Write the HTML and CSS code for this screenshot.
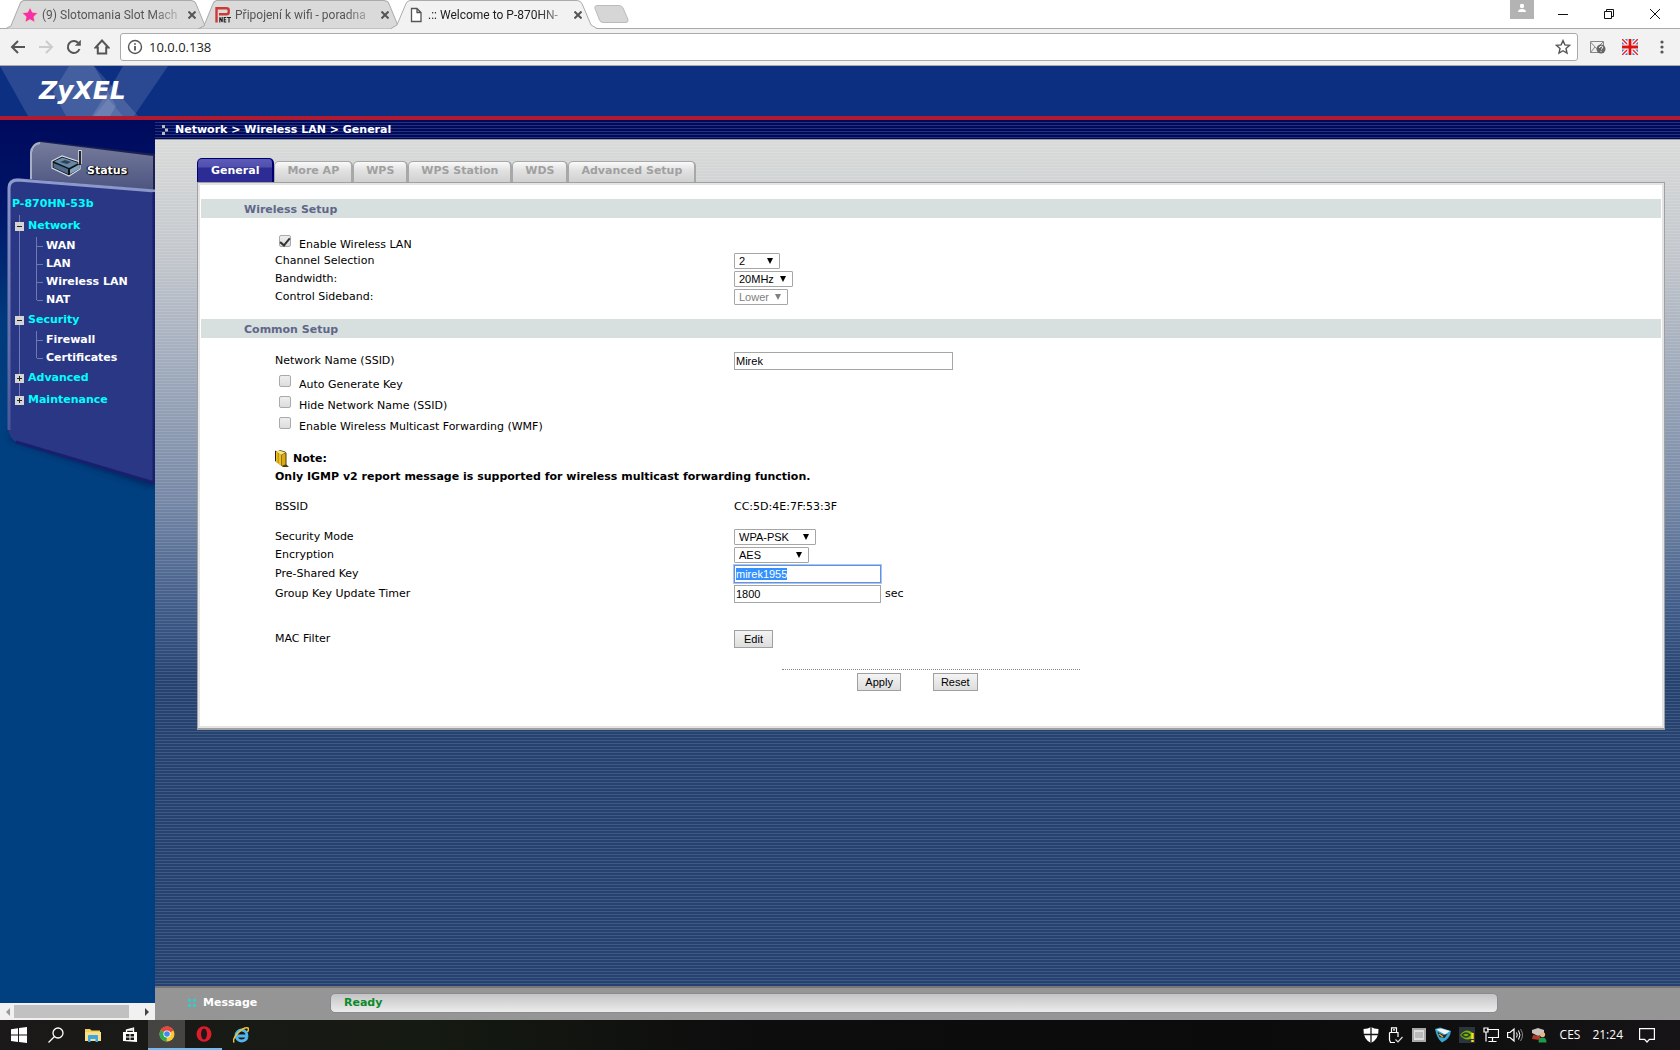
FILE: index.html
```html
<!DOCTYPE html>
<html lang="en">
<head>
<meta charset="utf-8">
<title>.:: Welcome to P-870HN-53b ::.</title>
<link rel="stylesheet" href="styles.css">
</head>
<body>
<div class="screen">

  <div class="tabstrip">
    <div class="browser-tab">
      <svg class="tab-shape" viewBox="0 0 208 28" preserveAspectRatio="none"><path d="M0 28L6 25L15 4Q16 1 19 .5H188Q192 1 193 4L202 25L208 28Z" fill="#dadada" stroke="#aaa"/></svg>
      <svg class="tab-icon" viewBox="0 0 16 16"><path d="M8 .5l2.300 4.700 5.400.7-3.900 3.800 1 5.500L8 12.600 3.200 15.200l1-5.500L.3 5.900l5.400-.7z" fill="#f52fa8" stroke="#f4d9a8" stroke-width=".6"/></svg>
      <span class="tab-title">(9) Slotomania Slot Mach</span>
      <button class="tab-close" aria-label="Close tab"><svg viewBox="0 0 8 8"><path d="M.5.5l7 7M7.500.5l-7 7"/></svg></button>
    </div>
    <div class="browser-tab">
      <svg class="tab-shape" viewBox="0 0 208 28" preserveAspectRatio="none"><path d="M0 28L6 25L15 4Q16 1 19 .5H188Q192 1 193 4L202 25L208 28Z" fill="#dadada" stroke="#aaa"/></svg>
      <svg class="tab-icon" viewBox="0 0 16 16"><path d="M1.500 15.500V1.300h10q2.200 0 2.200 1.800v2.200q0 2-2.200 2H4" fill="none" stroke="#cc3a38" stroke-width="2.400"/><path d="M4.800 15.500V10.200l2.400 4.800v-5M11.300 10.500H9.200v4.500h2.100M9.200 12.700h2M12 10.500h4M14 10.500v5" fill="none" stroke="#222" stroke-width="1.100"/></svg>
      <span class="tab-title">Připojení k wifi - poradna</span>
      <button class="tab-close" aria-label="Close tab"><svg viewBox="0 0 8 8"><path d="M.5.5l7 7M7.500.5l-7 7"/></svg></button>
    </div>
    <div class="browser-tab active">
      <svg class="tab-shape" viewBox="0 0 208 29" preserveAspectRatio="none"><path d="M0 29L6 25L15 4Q16 1 19 .5H188Q192 1 193 4L202 25L208 29Z" fill="#f2f2f2"/><path d="M0 28.500L6 25L15 4Q16 1 19 .5H188Q192 1 193 4L202 25L208 28.500" fill="none" stroke="#aaa"/></svg>
      <svg class="tab-icon" viewBox="0 0 16 16"><path d="M3.500 1.500H9l4 4v9H3.500zM9 1.500v4h4" fill="#fff" stroke="#555" stroke-width="1.300"/></svg>
      <span class="tab-title">.:: Welcome to P-870HN-</span>
      <button class="tab-close" aria-label="Close tab"><svg viewBox="0 0 8 8"><path d="M.5.5l7 7M7.500.5l-7 7"/></svg></button>
    </div>
    <button class="new-tab" aria-label="New tab"><svg viewBox="0 0 35 18"><path d="M3 .5H25Q28 .5 29 3L34 14.500Q34.500 17.500 32 17.500H9Q6.500 17.500 5.500 15L.8 3Q.5.8 3 .5Z" fill="#d6d6d6" stroke="#bbb"/></svg></button>
    <div class="window-controls">
      <span class="profile"><svg viewBox="0 0 24 19"><circle cx="12" cy="6" r="2.200" fill="#fff"/><path d="M8 12q0-3 4-3t4 3z" fill="#fff"/></svg></span>
      <button aria-label="Minimize"><svg viewBox="0 0 12 12"><path d="M1 6.500h10"/></svg></button>
      <button aria-label="Restore"><svg viewBox="0 0 12 12"><path d="M1.500 3.500h7v7h-7zM3.500 3V1.500h7v7H9"/></svg></button>
      <button aria-label="Close"><svg viewBox="0 0 12 12"><path d="M1 1l10 10M11 1L1 11"/></svg></button>
    </div>
  </div>

  <div class="toolbar">
    <button aria-label="Back"><svg viewBox="0 0 16 16"><path d="M15 8H2M8 2L2 8l6 6"/></svg></button>
    <button aria-label="Forward" disabled><svg viewBox="0 0 16 16"><path d="M1 8h13M8 2l6 6-6 6"/></svg></button>
    <button aria-label="Reload"><svg viewBox="0 0 16 16"><path d="M13.500 10A6 6 0 1 1 12.200 3.800"/><path d="M14.800.8v6h-6z" fill="#555" stroke="none"/></svg></button>
    <button aria-label="Home"><svg viewBox="0 0 16 16"><path d="M8 1.500L1.500 8.500h2.300v6h8.400v-6h2.300z"/></svg></button>
    <div class="omnibox">
      <svg viewBox="0 0 16 16"><circle cx="8" cy="8" r="6.500" fill="none" stroke="#555" stroke-width="1.400"/><path d="M8 7v4.500M8 4.200v1.600" stroke="#555" stroke-width="1.800"/></svg>
      <input class="address" aria-label="Address" value="10.0.0.138" spellcheck="false">
      <svg viewBox="0 0 16 16"><path d="M8 1.600l1.900 4.300 4.600.5-3.500 3.100 1 4.600L8 11.700l-4 2.400 1-4.600L1.500 6.400l4.600-.5z" fill="none" stroke="#555" stroke-width="1.400"/></svg>
    </div>
    <svg class="ext" viewBox="0 0 16 16"><path d="M.5 2.500h13v11H.5zM.5 3l6 6.500 6.500-6.500M.5 13.500L5 8" fill="#eee" stroke="#888"/><circle cx="11" cy="10" r="4.500" fill="#666"/><path d="M9.500 9q0-1.800 1.700-1.800T12.700 9L11 10.500M11 11.800v1" stroke="#fff" fill="none"/></svg>
    <svg class="ext" viewBox="0 0 16 16"><path d="M0 0h16v16H0z" fill="#4a7fd0"/><path d="M0 0l16 16M16 0L0 16" stroke="#fff" stroke-width="4"/><path d="M0 0l16 16M16 0L0 16" stroke="#e22" stroke-width="1.500"/><path d="M8 0v16M0 8h16" stroke="#fff" stroke-width="5"/><path d="M8 0v16M0 8h16" stroke="#e01010" stroke-width="2.800"/></svg>
    <button class="menu" aria-label="Menu"><svg viewBox="0 0 16 16"><circle cx="8" cy="3" r="1.600"/><circle cx="8" cy="8" r="1.600"/><circle cx="8" cy="13" r="1.600"/></svg></button>
  </div>

  <header class="banner">
    <svg class="diamonds" viewBox="0 0 170 50"><g fill="#fff"><path d="M0 0H94L138 50H28Z" opacity=".13"/><path d="M69 0H94L116 40L110 50H66L53 26Z" opacity=".12"/><path d="M123 0H168L134 50H92L115 14Z" opacity=".13"/><path d="M94 50L108 33L123 50Z" opacity=".1"/></g></svg>
    <span class="brand">ZyXEL</span>
  </header>

  <div class="frames">
    <aside class="sidebar">
      <nav class="side-panel">
        <svg class="panel-art" viewBox="0 0 155 370" aria-hidden="true">
          <defs>
            <linearGradient id="tabfill" x1="0" y1="0" x2="0" y2="1"><stop offset="0" stop-color="#767c9c"/><stop offset=".6" stop-color="#585f88"/><stop offset="1" stop-color="#454c78"/></linearGradient>
            <linearGradient id="rim" x1="0" y1="0" x2="0" y2="1"><stop offset="0" stop-color="#8e9acb"/><stop offset="1" stop-color="#4c5798"/></linearGradient>
            <filter id="soft" x="-10%" y="-10%" width="120%" height="120%"><feGaussianBlur stdDeviation="3"/></filter>
          </defs>
          <path d="M10 320L155 368V340L14 300Z" fill="#02285e" filter="url(#soft)"/>
          <path d="M31 80V32Q32 22 41 21L155 34V80Z" fill="#1b2050"/>
          <path d="M30 80V33Q31 23 40 22L153 36V80Z" fill="url(#tabfill)"/>
          <path d="M31 62V33Q32 24 40 23" fill="none" stroke="#a8aec6" stroke-width="2"/>
          <path d="M8 308V66Q9 58 17 58L155 70V363L16 322Q9 318 8 308Z" fill="#2a3784"/>
          <path d="M9 310V68Q9 60 18 60L155 71" fill="none" stroke="url(#rim)" stroke-width="3"/>
          <path d="M16 322L155 363M154 72V363" fill="none" stroke="#18206e" stroke-width="3"/>
        </svg>
        <a class="status" href="#status">
          <svg viewBox="0 0 32 28"><path d="M1 12L11 7l18 6v7l-11 7L1 19z" fill="#111" stroke="#d8dce8" stroke-width="1.200"/><path d="M29 15V1" stroke="#d8dce8" stroke-width="3.500"/><path d="M29 16V2" stroke="#111" stroke-width="1.800"/><path d="M3 12.500l8.500-4 16 5.500-9.500 5z" fill="#6689aa"/><path d="M2.500 14l14.500 6v5L2.500 18.500z" fill="#4d6c8b"/><path d="M19 20.500l9-5v4.500l-9 5z" fill="#7fa2bd"/><path d="M9 13l5-2 6 2-4 2z" fill="#2d4358"/></svg>
          Status
        </a>
        <div class="tree">
          <a class="device" href="#device">P-870HN-53b</a>
          <ul>
            <li><a class="group open" href="#network">Network</a>
              <ul><li><a href="#wan">WAN</a></li><li><a href="#lan">LAN</a></li><li><a href="#wlan">Wireless LAN</a></li><li><a href="#nat">NAT</a></li></ul>
            </li>
            <li><a class="group open" href="#security">Security</a>
              <ul><li><a href="#firewall">Firewall</a></li><li><a href="#certificates">Certificates</a></li></ul>
            </li>
            <li class="closed"><a class="group" href="#advanced">Advanced</a></li>
            <li class="closed"><a class="group" href="#maintenance">Maintenance</a></li>
          </ul>
        </div>
      </nav>
      <div class="hscroll"><span class="arrow left"></span><span class="thumb"></span><span class="arrow right"></span></div>
    </aside>

    <main class="main">
      <div class="crumbs">
        <svg viewBox="0 0 8 11"><path d="M1 0h3v3H1zM4 3.500h3v3H4zM1 7h3v3H1z" fill="#bbb"/></svg>
        Network &gt; Wireless LAN &gt; General
      </div>
      <div class="content">
        <nav class="page-tabs">
          <a class="current" href="#general">General</a>
          <a href="#more-ap">More AP</a>
          <a href="#wps">WPS</a>
          <a href="#wps-station">WPS Station</a>
          <a href="#wds">WDS</a>
          <a href="#advanced-setup">Advanced Setup</a>
        </nav>
        <form class="card">
          <h2>Wireless Setup</h2>
          <div class="group-rows first">
            <label class="check"><input type="checkbox" checked>Enable Wireless LAN</label>
            <div class="row"><label for="channel">Channel Selection</label>
              <span class="select w46"><select id="channel"><option>2</option></select></span></div>
            <div class="row"><label for="bandwidth">Bandwidth:</label>
              <span class="select w59"><select id="bandwidth"><option>20MHz</option></select></span></div>
            <div class="row"><label for="sideband">Control Sideband:</label>
              <span class="select w54 off"><select id="sideband" disabled><option>Lower</option></select></span></div>
          </div>
          <h2>Common Setup</h2>
          <div class="group-rows second">
            <div class="row tall"><label for="ssid">Network Name (SSID)</label><input class="text wide" id="ssid" value="Mirek"></div>
            <label class="check tall"><input type="checkbox">Auto Generate Key</label>
            <label class="check tall"><input type="checkbox">Hide Network Name (SSID)</label>
            <label class="check tall"><input type="checkbox">Enable Wireless Multicast Forwarding (WMF)</label>
            <div class="note">
              <svg viewBox="0 0 14 18"><path d="M0 .5l3 1.500V13L0 11z" fill="#2a2410"/><path d="M2 1.500L5 0l5 1.500 1.500 1.500v11.500l2.500 2.500H8L1.500 12z" fill="#4a3c10"/><path d="M1 1.500L6 5v10.500L1 12z" fill="#f0c020"/><path d="M1 1.500L4.500.5l6 2L6 5z" fill="#fbe27a"/><path d="M6.500 5l4-2v11.500l-4 1.500z" fill="#dba912"/><path d="M3.200 3v10" stroke="#9a7a10" stroke-width=".8"/></svg>
              Note:
            </div>
            <p class="note-text">Only IGMP v2 report message is supported for wireless multicast forwarding function.</p>
            <div class="row bssid"><span>BSSID</span><span>CC:5D:4E:7F:53:3F</span></div>
            <div class="row"><label for="mode">Security Mode</label>
              <span class="select w82"><select id="mode"><option>WPA-PSK</option></select></span></div>
            <div class="row"><label for="enc">Encryption</label>
              <span class="select w75"><select id="enc"><option>AES</option></select></span></div>
            <div class="row key"><label for="psk">Pre-Shared Key</label><input class="text" id="psk" value="mirek1955"></div>
            <div class="row key"><label for="timer">Group Key Update Timer</label><span class="unit"><input class="text" id="timer" value="1800">sec</span></div>
            <div class="row mac"><span>MAC Filter</span><button type="button">Edit</button></div>
          </div>
          <div class="actions"><button type="button">Apply</button><button type="button">Reset</button></div>
        </form>
      </div>
      <footer class="message-bar">
        <span class="message-label"><svg viewBox="0 0 9 9"><path d="M0 0h3v3H0zM5 0h3v3H5zM0 5h3v3H0zM5 5h3v3H5z" fill="#3cc8c4"/></svg>Message</span>
        <output class="message">Ready</output>
      </footer>
    </main>
  </div>

  <div class="taskbar">
    <button aria-label="Start"><svg viewBox="0 0 16 16"><path d="M0 2.200L7 1.200V7.600H0zM8 1L16 0V7.600H8zM0 8.500H7V15L0 14zM8 8.500H16V16L8 15z" fill="#fff"/></svg></button>
    <button aria-label="Search"><svg viewBox="0 0 16 16"><circle cx="10" cy="6" r="5" fill="none" stroke="#fff" stroke-width="1.300"/><path d="M6.500 9.500L.5 15.500" stroke="#fff" stroke-width="1.300"/></svg></button>
    <button aria-label="File Explorer"><svg viewBox="0 0 16 16"><path d="M0 2h5l1.500 1.500H15V14H0z" fill="#f5cf5c"/><path d="M0 5h16v9H0z" fill="#fbe08c"/><path d="M3 15V9q0-1 1-1h8q1 0 1 1v6h-2.500v-3h-5v3z" fill="#3fa7e0"/></svg></button>
    <button aria-label="Store"><svg viewBox="0 0 16 16"><path d="M1 5h14v10L1 14z" fill="#fff"/><path d="M4.500 5V3l7-2v4M4.500 3h7" fill="none" stroke="#fff" stroke-width="1.300"/><path d="M4 7h3.500v2.500H4zM8.500 7H12v2.500H8.500zM4 10.500h3.500V13H4zM8.500 10.500H12V13H8.500z" fill="#1a1818"/></svg></button>
    <button class="running focused" aria-label="Chrome"><svg viewBox="0 0 16 16"><circle cx="8" cy="8" r="7.500" fill="#fcc934"/><path d="M8 8L1.500 4.200A7.500 7.500 0 0 1 14.500 4.500z" fill="#e8453c"/><path d="M8 8L1.500 4.200A7.500 7.500 0 0 0 7.500 15.500z" fill="#2da94f"/><path d="M8 4.500h6.500l-1-1.500H8z" fill="#e8453c"/><circle cx="8" cy="8" r="3.600" fill="#fff"/><circle cx="8" cy="8" r="2.800" fill="#4285f4"/></svg></button>
    <button class="running" aria-label="Opera"><svg viewBox="0 0 16 16"><ellipse cx="8" cy="8" rx="7.500" ry="7.800" fill="#e01b2c"/><ellipse cx="8" cy="8" rx="3" ry="5.600" fill="#1a1818"/></svg></button>
    <button aria-label="Internet Explorer"><svg viewBox="0 0 16 16"><path d="M14 10.500Q12.500 14 8.500 14A5.500 5.500 0 1 1 14 9H4.500" fill="none" stroke="#52b7ee" stroke-width="2.800"/><path d="M1 15.500Q-1 12 5 6T15 1q1 1-.5 4" fill="none" stroke="#f5c52c" stroke-width="1.500"/></svg></button>
    <div class="tray">
      <svg viewBox="0 0 16 16"><path d="M8 0q3 2 7.500 2Q16 12 8 16 0 12 .5 2 5 2 8 0z" fill="#fff"/><path d="M8 0v16M0 7.500h16" stroke="#181616" stroke-width="1.300"/></svg>
      <svg viewBox="0 0 16 16"><path d="M4.500 5V.8h5V5M2.500 5.500H11V10M2.500 5.500V13l1 2.500H8M6 2.800h2" fill="none" stroke="#fff" stroke-width="1.200"/><path d="M8.500 12.500l2.500 2.500 4.500-5" fill="none" stroke="#ddd" stroke-width="1.200"/></svg>
      <svg viewBox="0 0 16 16"><path d="M1 1h14v14H1z" fill="#a9a9a9"/><path d="M3 3h10v10H3z" fill="#ddd"/><path d="M4 6h8M4 8h8M4 10h8" stroke="#999"/></svg>
      <svg viewBox="0 0 16 16"><path d="M0 2l5-1.500L16 4q-1 8-9 11.500Q2 12 0 2z" fill="#3aa6cf"/><path d="M1 2.500l5-1L15 4l-5 3.500z" fill="#f2f2f2"/><path d="M2.500 5l6 3 4-1-3 4-5-1z" fill="#223"/><path d="M4 7l4 3" stroke="#e8b020" stroke-width="1.500"/></svg>
      <svg viewBox="0 0 16 16"><path d="M0 0h16v16H0z" fill="#2c3440"/><path d="M1 8q6-8 13-2v5q-8 4-13-3z" fill="#76b900"/><path d="M3 8q4-4 8 0-4 4-8 0z" fill="none" stroke="#2c3440" stroke-width="1.300"/><path d="M13.500 6v6M13.500 13v2" stroke="#ffd91a" stroke-width="2.500"/></svg>
      <svg viewBox="0 0 16 16"><path d="M4 2.500h11.500v8H5M9.500 11v3.500M5.500 14.500h8M1 1h4v4H1zM3 5v9.500" fill="none" stroke="#fff" stroke-width="1.200"/></svg>
      <svg viewBox="0 0 16 16"><path d="M.6 5.500H3l4-3.500v12l-4-3.500H.6z" fill="none" stroke="#fff" stroke-width="1.200"/><path d="M9.500 5.500q1.500 2.500 0 5M11.500 3.500q3 4.500 0 9" fill="none" stroke="#fff"/><path d="M13.500 2q4 6 0 12" fill="none" stroke="#888"/></svg>
      <svg viewBox="0 0 16 16"><path d="M1 3l6-2 6 2v4l-6 2-6-3z" fill="#c9c4bd"/><path d="M2 8l7 1v4L1 12z" fill="#b23a2c"/><circle cx="11.500" cy="7.500" r="2.600" fill="#e9b48b"/><path d="M7.500 15.500q0-5 4-5t4 5z" fill="#1f9a4a"/></svg>
      <span class="lang">CES</span>
      <span class="clock">21:24</span>
      <svg viewBox="0 0 16 16"><path d="M.6 1.600h14.800v10.800h-5L8 15l-2.400-2.600h-5z" fill="none" stroke="#fff" stroke-width="1.200"/></svg>
    </div>
  </div>
</div>
<script src="script.js"></script>
</body>
</html>
```

FILE: script.js
```js
// The key field opens with its value selected.
const psk = document.getElementById('psk');
psk.focus();
psk.select();
```

FILE: styles.css
```css
* { box-sizing: border-box; }
body {
  margin: 0;
  font: 11px/18px "DejaVu Sans", Verdana, sans-serif;
  color: #000;
}
a { color: inherit; text-decoration: none; }
ul { list-style: none; margin: 0; padding: 0; }
button, input, select { font-family: inherit; margin: 0; }
.screen { display: flex; flex-direction: column; min-height: 100vh; }

/* Browser tabs */
.tabstrip {
  display: flex;
  height: 29px;
  padding-left: 5px;
  background: #fff;
  border-bottom: 1px solid #aaa;
  font: 12px/28px Roboto, "Open Sans", sans-serif;
}
.browser-tab {
  display: grid;
  grid-template-columns: 16px 138px 16px;
  align-items: center;
  column-gap: 4px;
  flex: 0 0 206px;
  min-width: 0;
  height: 29px;
  margin-right: -13px;
  padding-left: 17px;
  color: #555;
}
.browser-tab > * { grid-row: 1; }
.browser-tab.active { z-index: 1; color: #222; }
.tab-shape { grid-column: 1 / -1; width: 206px; height: 29px; margin-left: -17px; }
.tab-icon { grid-column: 1; width: 16px; height: 16px; }
.tab-title {
  grid-column: 2;
  white-space: nowrap;
  mask-image: linear-gradient(90deg, #000 80%, rgba(0, 0, 0, .2));
}
.tab-close { grid-column: 3; display: grid; place-items: center; padding: 0; border: 0; background: none; }
.tab-close svg { width: 8px; height: 8px; stroke: #555; stroke-width: 2; }
.new-tab { margin-left: 10px; padding: 0; border: 0; background: none; }
.new-tab svg { display: block; width: 35px; height: 18px; }
.window-controls { display: flex; align-items: flex-start; margin-left: auto; }
.profile { width: 24px; height: 19px; margin-right: 6px; background: #b3b3b3; }
.profile svg { display: block; }
.window-controls button { width: 46px; height: 27px; padding: 0; border: 0; background: none; display: grid; place-items: center; }
.window-controls button svg { width: 12px; height: 12px; fill: none; stroke: #111; }
.window-controls { padding-right: 2px; }

/* Browser toolbar */
.toolbar {
  display: flex;
  align-items: center;
  gap: 12px;
  height: 37px;
  padding: 0 10px;
  background: #f2f2f2;
  border-bottom: 1px solid #aaa;
}
.toolbar button { padding: 0; border: 0; background: none; width: 16px; height: 16px; }
.toolbar svg { display: block; width: 16px; height: 16px; flex: none; }
.toolbar button svg { fill: none; stroke: #555; stroke-width: 2; }
.toolbar button:disabled svg { stroke: #ccc; }
.toolbar .menu svg { fill: #555; stroke: none; }
.toolbar .menu, .toolbar .ext + .ext { margin-left: 4px; }
.omnibox {
  display: flex;
  align-items: center;
  gap: 6px;
  flex: 1;
  height: 28px;
  margin-left: -2px;
  padding: 0 6px;
  border: 1px solid #aaa;
  border-radius: 3px;
  background: #fff;
}
.address { flex: 1; border: 0; outline: 0; padding: 0; background: none; font: 13px/20px "Open Sans", "Noto Sans", sans-serif; color: #222; }

/* Banner */
.banner { display: grid; height: 54px; background: #0c2f82; border-bottom: 4px solid #b01a30; }
.banner > * { grid-area: 1 / 1; }
.diamonds { width: 170px; height: 50px; }
.brand {
  padding-left: 39px;
  align-self: center;
  font: italic bold 25px/34px "DejaVu Sans", Verdana, sans-serif;
  color: #fff;
}

/* Left frame */
.frames { display: flex; flex: 1; }
.sidebar {
  display: flex;
  flex-direction: column;
  flex: 0 0 155px;
  background: linear-gradient(#000a5c, #001468 80px, #003a7c 200px, #004080 300px);
}
.side-panel { display: grid; grid-template: 60px 1fr / 155px; }
.panel-art { grid-area: 1 / 1 / 3 / 2; width: 155px; height: 370px; }
.status {
  grid-area: 1 / 1;
  display: flex;
  align-items: flex-end;
  gap: 4px;
  padding-left: 51px;
  font: bold 11px/18px "DejaVu Sans", sans-serif;
  color: #fff;
  text-shadow: 1px 1px 1px #000, -1px 0 1px #000, 1px 0 1px #000;
}
.status svg { width: 32px; height: 28px; margin-bottom: 3px; }
.tree { grid-area: 2 / 1; padding: 14px 0 0 12px; font-weight: bold; color: #fff; }
.device, .group { color: #0ff; }
.device { display: block; margin: 1px 0 2px; }
.tree > ul > li {
  background: linear-gradient(#6d79b0, #6d79b0) 7px 0 / 1px 100% no-repeat;
  padding-top: 2px;
}
.tree > ul > .closed { padding-bottom: 2px; }
.tree > ul > li:last-child { background-size: 1px 12px; }
.group { display: flex; align-items: center; gap: 4px; margin-left: 3px; }
.group::before {
  content: "";
  width: 9px;
  height: 9px;
  background:
    linear-gradient(#222, #222) 50% 50% / 5px 1px no-repeat,
    linear-gradient(#222, #222) 50% 50% / 1px 5px no-repeat,
    #d4d4d4;
}
.group.open::before { background: linear-gradient(#222, #222) 50% 50% / 5px 1px no-repeat, #d4d4d4; }
.tree ul ul { margin-left: 24px; padding-top: 2px; }
.tree ul ul li { display: flex; align-items: center; gap: 3px; border-left: 1px solid #6d79b0; }
.tree ul ul li::before { content: ""; width: 6px; height: 1px; background: #6d79b0; }
.tree ul ul li:last-child {
  border: 0;
  padding-left: 1px;
  background: linear-gradient(#6d79b0, #6d79b0) 0 0 / 1px 9px no-repeat;
}
.hscroll { display: flex; align-items: center; gap: 4px; height: 17px; margin-top: auto; padding: 0 6px; background: #f1f1f1; }
.thumb { width: 115px; height: 13px; background: #c1c1c1; }
.arrow { border: 4px solid transparent; }
.arrow.left { border-left: 0; border-right-color: #999; }
.arrow.right { border-right: 0; border-left-color: #444; margin-left: auto; }

/* Main frame */
.main {
  display: flex;
  flex-direction: column;
  flex: 1;
  background:
    repeating-linear-gradient(transparent 0 2px, rgba(255, 255, 255, .12) 2px 3px),
    linear-gradient(#d9dbd9 20px, #c2c6cc 140px, #9faabb 250px, #7688a6 380px, #3f5b88 490px, #264270 560px);
}
.crumbs {
  display: flex;
  gap: 6px;
  height: 20px;
  padding-left: 6px;
  font-weight: bold;
  line-height: 20px;
  color: #fff;
  background: repeating-linear-gradient(#000a5c 0 2px, #26337a 2px 3px);
  border-bottom: 1px solid #999;
}
.crumbs svg { width: 8px; height: 11px; margin-top: 5px; }
.content { flex: 1; padding: 18px 15px 0 42px; }
.page-tabs { display: flex; align-items: flex-end; height: 24px; font-weight: bold; color: #a0a0a0; }
.page-tabs a {
  height: 21px;
  padding: 0 12px;
  border: 1px solid #a8a8a8;
  border-width: 1px 2px 0 1px;
  border-radius: 5px 5px 0 0;
  background: linear-gradient(#fafafa, #e2e2e2 8px, #d0d0d0);
}
.page-tabs .current {
  height: 24px;
  padding: 3px 13px 0;
  border-color: #000070;
  background: linear-gradient(#5c5cb8, #5050ac 8px, #2c2c94 9px);
  color: #fff;
}
.card {
  border: 1px solid #a0a0a0;
  border-width: 1px 1px 2px;
  background: #fff;
  box-shadow: inset 0 0 0 2px #e4e4e4;
  padding: 16px 3px 37px;
}
.card h2 { margin: 0; padding-left: 43px; height: 19px; font: bold 11px/21px "DejaVu Sans", Verdana, sans-serif; color: #60668a; background: #d7e0de; }
.group-rows { padding-left: 74px; }
.first { padding-top: 16px; padding-bottom: 13px; }
.second { padding-top: 12px; }
.row { display: grid; grid-template-columns: 459px 1fr; align-items: center; height: 18px; }
.row.tall { height: 22px; margin-bottom: 2px; }
.row.key { height: 20px; }
.row.bssid { margin: 12px 0; }
.row.mac { margin-top: 26px; }
.check { display: flex; align-items: flex-start; gap: 8px; height: 18px; padding-left: 4px; line-height: 22px; }
.check.tall { height: 21px; }
.check input {
  appearance: none;
  width: 12px;
  height: 12px;
  margin-top: 1px;
  border: 1px solid #aaa;
  border-radius: 2px;
  background: linear-gradient(#eee, #ddd);
}
.check input:checked { display: grid; place-items: center; }
.check input:checked::before {
  content: "";
  width: 4px;
  height: 8px;
  border: solid #333;
  border-width: 0 2px 2px 0;
  rotate: 40deg;
}
.select { display: grid; height: 16px; }
.select > select, .select::after { grid-area: 1 / 1; }
.select select {
  appearance: none;
  height: 16px;
  padding: 0 4px;
  border: 1px solid #a6a6a6;
  border-radius: 1px;
  background: #fff;
  font: 11px/14px "Liberation Sans", Arial, sans-serif;
  color: #000;
}
.select::after {
  content: "";
  place-self: center end;
  margin-right: 7px;
  border: solid transparent;
  border-width: 6px 3px 0;
  border-top-color: #000;
  pointer-events: none;
}
.select.off select { color: #808080; opacity: 1; }
.select.off::after { border-top-color: #808080; }
.w46 { width: 46px; }
.w54 { width: 54px; }
.w59 { width: 59px; }
.w75 { width: 75px; }
.w82 { width: 82px; }
.text {
  width: 147px;
  height: 18px;
  padding: 0 1px;
  border: 1px solid #a6a6a6;
  background: #fff;
  font: 11px/14px "Liberation Sans", Arial, sans-serif;
  color: #000;
}
.text.wide { width: 219px; }
.text:focus { outline: 1px solid #a8c6fa; border-color: #6490dc; }
.text::selection { background: #3390ff; color: #fff; text-decoration: underline wavy #e03030 1px; }
.unit { display: flex; align-items: center; gap: 4px; }
.note { display: flex; align-items: center; gap: 4px; margin-top: 13px; font-weight: bold; }
.note svg { width: 14px; height: 18px; }
.note-text { margin: 0; font-weight: bold; }
.card button {
  height: 18px;
  padding: 0 9px;
  border: 1px solid #a0a0a0;
  background: linear-gradient(#f4f4f4, #ddd);
  font: 11px/14px "Liberation Sans", Arial, sans-serif;
  color: #000;
}
.row button { justify-self: start; }
.actions {
  display: flex;
  justify-content: center;
  gap: 32px;
  width: 298px;
  margin: 21px auto 0;
  padding: 3px 27px 0 0;
  border-top: 1px dotted #888;
}
.card .actions button { padding: 0 7px; }
.message-bar { display: flex; align-items: center; height: 34px; padding: 0 0 2px 33px; background: #959595; border-top: 2px solid #787878; font-weight: bold; }
.message-label { display: flex; align-items: center; gap: 6px; width: 142px; color: #fff; }
.message-label svg { width: 9px; height: 9px; }
.message {
  flex: 0 1 1168px;
  height: 20px;
  margin-right: 182px;
  padding-left: 13px;
  border: 1px solid #8a8a92;
  border-radius: 5px;
  background: linear-gradient(#c4c4c4, #ececec);
  color: #0a8a2a;
}

/* Taskbar */
.taskbar { display: flex; height: 30px; background: linear-gradient(90deg, #1b1919, #151a12 25%, #0d0d0d 45%, #0b0b0b 75%, #161416); }
.taskbar button { display: grid; place-items: center; width: 37px; padding: 0; border: 0; background: none; }
.taskbar svg { display: block; width: 16px; height: 16px; }
.taskbar button.running { border-bottom: 2px solid #76b9ed; }
.taskbar button.focused { background: #454443; }
.tray { display: flex; align-items: center; gap: 8px; margin-left: auto; padding-right: 25px; color: #fff; font: 12px/30px "Open Sans", "Noto Sans", sans-serif; }
.lang { margin-left: 5px; }
.clock { margin: 0 8px 0 4px; }
```
